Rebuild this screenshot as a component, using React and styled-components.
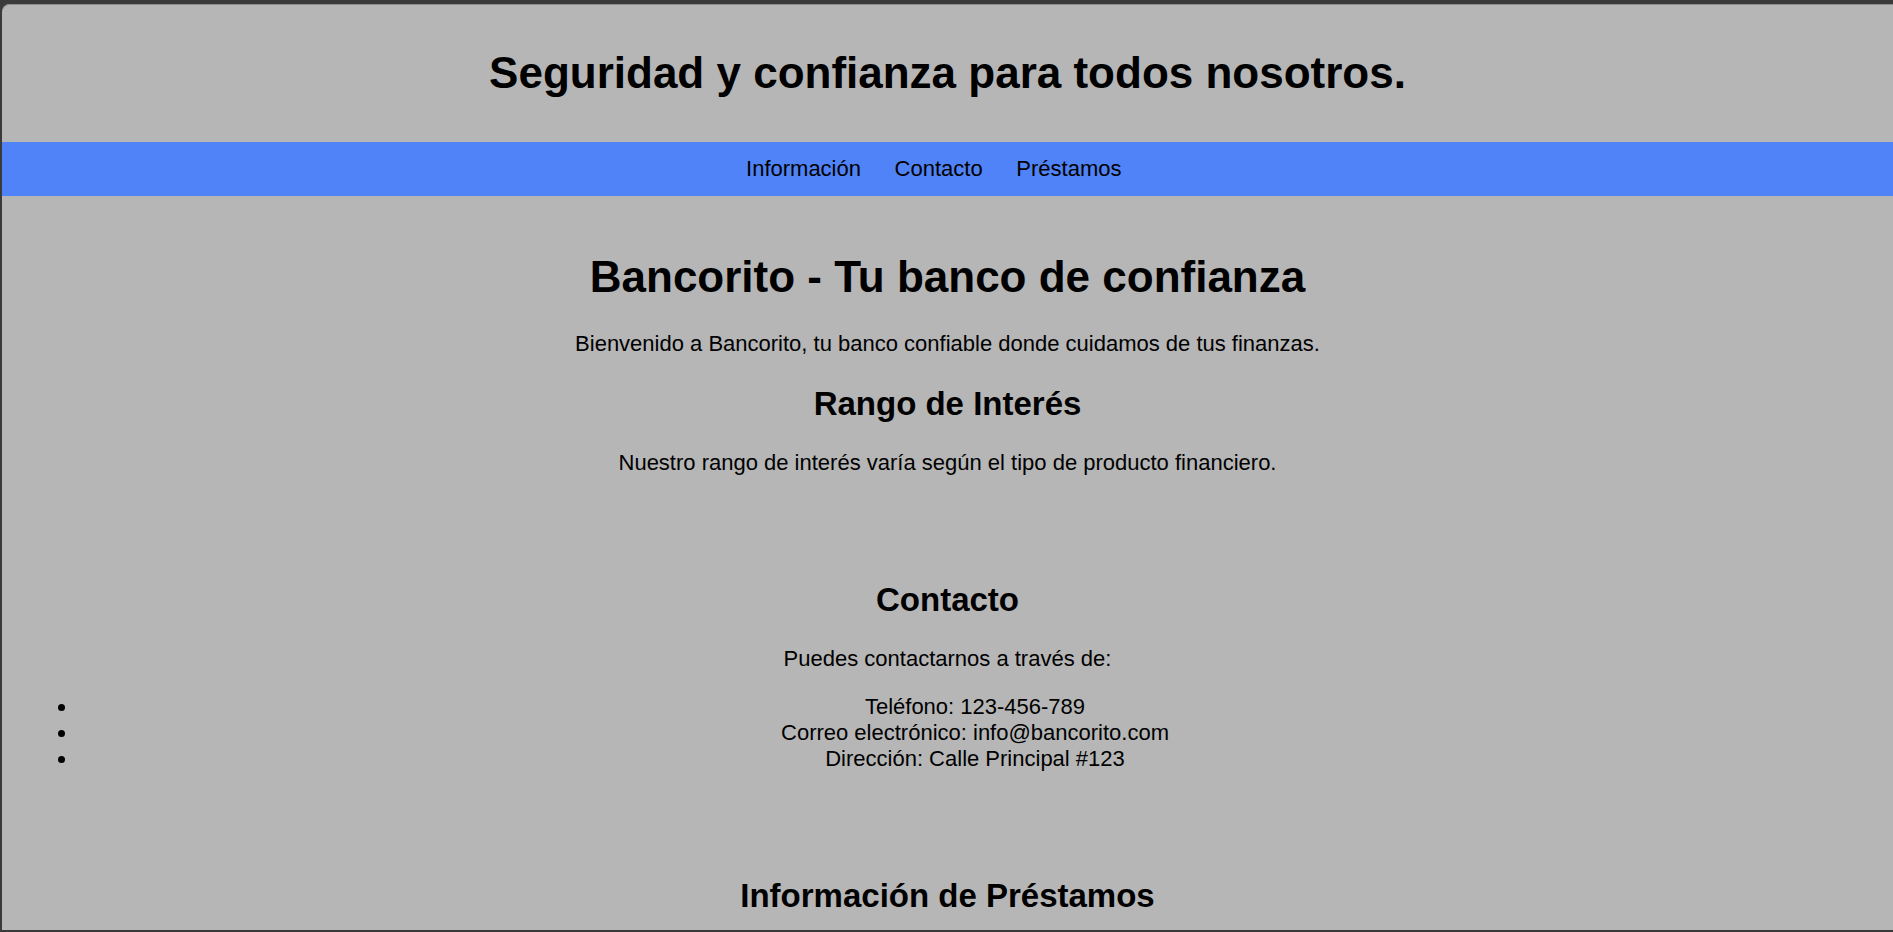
import React from "react";
import styled, { createGlobalStyle } from "styled-components";

const GlobalStyle = createGlobalStyle`
  html, body {
    margin: 0;
    padding: 0;
    overflow: hidden;
    background: #3a3a3a;
  }

  body {
    font-family: "Liberation Sans", Arial, sans-serif;
    color: #000;
  }
`;

// the dark window chrome round the page
const Frame = styled.div`
  width: 1893px;
  height: 932px;
  box-sizing: border-box;
  padding: 4px 0 2px 2px;
  background: #3a3a3a;
`;

const Page = styled.div`
  height: 100%;
  overflow: hidden;
  background: #b6b6b6;
  border-top-left-radius: 8px;
  box-shadow: inset 0 1px 0 #8e8e8e;
`;

const Header = styled.header`
  padding: 14.6px 0;
  text-align: center;

  h1 {
    margin: 29.5px 0;
    font-size: 44px;
    font-weight: bold;
  }
`;

const Nav = styled.nav`
  background: #4f83f7;
  padding: 13.9px 0;
  text-align: center;
  font-size: 22px;
`;

const NavLink = styled.a`
  color: #000;
  text-decoration: none;
  margin-right: 27.5px;
`;

const Section = styled.section`
  padding: 26.2px 20.6px 29.3px;
  text-align: center;

  h1 {
    margin: 29.5px 0;
    font-size: 44px;
  }

  h2 {
    margin: 27.4px 0;
    font-size: 33px;
  }

  p {
    margin: 22px 0;
    font-size: 22px;
  }
`;

const ContactList = styled.ul`
  margin: 22px 0;
  padding-left: 55px;
  font-size: 22px;
  list-style: disc outside;
`;

const links = ["Información", "Contacto", "Préstamos"];

const contactItems = [
  "Teléfono: 123-456-789",
  "Correo electrónico: info@bancorito.com",
  "Dirección: Calle Principal #123"
];

const App = () => {
  return (
    <Frame>
      <GlobalStyle />
      <Page>
        <Header>
          <h1>Seguridad y confianza para todos nosotros.</h1>
        </Header>

        <Nav>
          {links.map((label, i) => (
            <React.Fragment key={label}>
              <NavLink href={"#" + i}>{label}</NavLink>{" "}
            </React.Fragment>
          ))}
        </Nav>

        <Section>
          <h1>Bancorito - Tu banco de confianza</h1>
          <p>
            Bienvenido a Bancorito, tu banco confiable donde cuidamos de tus
            finanzas.
          </p>
          <h2>Rango de Interés</h2>
          <p>Nuestro rango de interés varía según el tipo de producto financiero.</p>
        </Section>

        <Section>
          <h2>Contacto</h2>
          <p>Puedes contactarnos a través de:</p>
          <ContactList>
            {contactItems.map(item => (
              <li key={item}>{item}</li>
            ))}
          </ContactList>
        </Section>

        <Section>
          <h2>Información de Préstamos</h2>
        </Section>
      </Page>
    </Frame>
  );
};

export default App;
